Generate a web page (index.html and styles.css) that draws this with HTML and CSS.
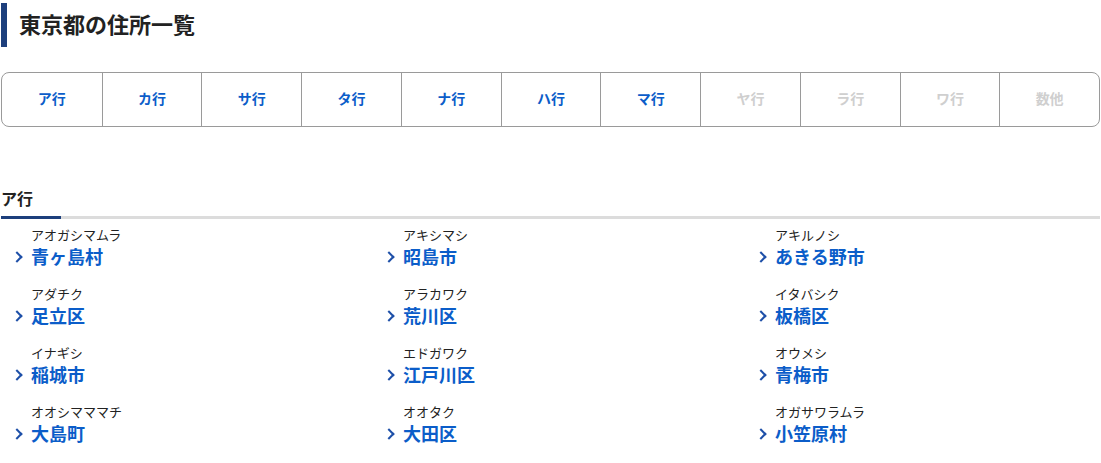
FILE: index.html
```html
<!DOCTYPE html>
<html lang="ja">

<head>
    <meta charset="UTF-8" />
    <title>東京都の住所一覧</title>
    <link rel="stylesheet" href="styles.css">
</head>

<body>
    <div class="page">
        <!-- タイトル -->
        <h1 class="page-title">東京都の住所一覧</h1>

        <!-- 行ナビ -->
        <ul class="kana-nav">
            <li><a href="#a">ア行</a></li>
            <li><a href="#ka">カ行</a></li>
            <li><a href="#sa">サ行</a></li>
            <li><a href="#ta">タ行</a></li>
            <li><a href="#na">ナ行</a></li>
            <li><a href="#ha">ハ行</a></li>
            <li><a href="#ma">マ行</a></li>
            <li><span class="off">ヤ行</span></li>
            <li><span class="off">ラ行</span></li>
            <li><span class="off">ワ行</span></li>
            <li><span class="off">数他</span></li>
        </ul>

        <!-- ア行 -->
        <section class="group" id="a">
            <h2 class="group-title"><span>ア行</span></h2>
            <ul class="city-list">
                <li><span class="kana">アオガシマムラ</span><a href="#">青ヶ島村</a></li>
                <li><span class="kana">アキシマシ</span><a href="#">昭島市</a></li>
                <li><span class="kana">アキルノシ</span><a href="#">あきる野市</a></li>
                <li><span class="kana">アダチク</span><a href="#">足立区</a></li>
                <li><span class="kana">アラカワク</span><a href="#">荒川区</a></li>
                <li><span class="kana">イタバシク</span><a href="#">板橋区</a></li>
                <li><span class="kana">イナギシ</span><a href="#">稲城市</a></li>
                <li><span class="kana">エドガワク</span><a href="#">江戸川区</a></li>
                <li><span class="kana">オウメシ</span><a href="#">青梅市</a></li>
                <li><span class="kana">オオシマママチ</span><a href="#">大島町</a></li>
                <li><span class="kana">オオタク</span><a href="#">大田区</a></li>
                <li><span class="kana">オガサワラムラ</span><a href="#">小笠原村</a></li>
            </ul>
        </section>
    </div>
</body>

</html>
```

FILE: styles.css
```css
html,
body {
    margin: 0;
    padding: 0;
    background: #fff;
    color: #222;
    font-family: "Noto Sans CJK JP", "Noto Sans", sans-serif;
    overflow: hidden;
}

.page {
    padding: 3px 1px 0 1px;
}

/* タイトル */
.page-title {
    margin: 0;
    border-left: 6px solid #1d3f7c;
    padding-left: 12px;
    height: 44px;
    line-height: 40px;
    font-size: 22px;
    font-weight: bold;
    color: #222;
}

/* 行ナビ */
.kana-nav {
    list-style: none;
    margin: 25px 0 0 0;
    padding: 0;
    display: grid;
    grid-template-columns: repeat(11, 1fr);
    border: 1px solid #9a9a9a;
    border-radius: 8px;
    height: 53px;
}

.kana-nav li {
    display: flex;
    justify-content: center;
    align-items: center;
    border-left: 1px solid #9a9a9a;
    padding-bottom: 3px;
}

.kana-nav li:first-child {
    border-left: none;
}

.kana-nav a,
.kana-nav .off {
    font-size: 14px;
    font-weight: bold;
    text-decoration: none;
    color: #0b5dc9;
}

.kana-nav .off {
    color: #cfcfcf;
}

/* グループ */
.group {
    margin-top: 59px;
}

.group-title {
    margin: 0;
    font-size: 16px;
    font-weight: bold;
    line-height: 24px;
    border-bottom: 3px solid #dcdcdc;
    padding-bottom: 6px;
    position: relative;
}

.group-title::after {
    content: "";
    position: absolute;
    left: 0;
    bottom: -3px;
    width: 60px;
    height: 3px;
    background: #1d3f7c;
}

.city-list {
    list-style: none;
    margin: 0;
    padding: 7px 0 0 0;
    display: grid;
    grid-template-columns: repeat(3, 372px);
    row-gap: 17px;
}

.city-list li {
    display: flex;
    flex-direction: column;
    padding-left: 30px;
    position: relative;
}

.city-list .kana {
    font-size: 13px;
    line-height: 18px;
    color: #222;
}

.city-list a {
    font-size: 18px;
    font-weight: bold;
    line-height: 24px;
    color: #0b5dc9;
    text-decoration: none;
}

.city-list li::before {
    content: "";
    position: absolute;
    left: 12px;
    top: 27px;
    width: 6px;
    height: 6px;
    border-top: 2px solid #1d4fa8;
    border-right: 2px solid #1d4fa8;
    transform: rotate(45deg);
}
```
